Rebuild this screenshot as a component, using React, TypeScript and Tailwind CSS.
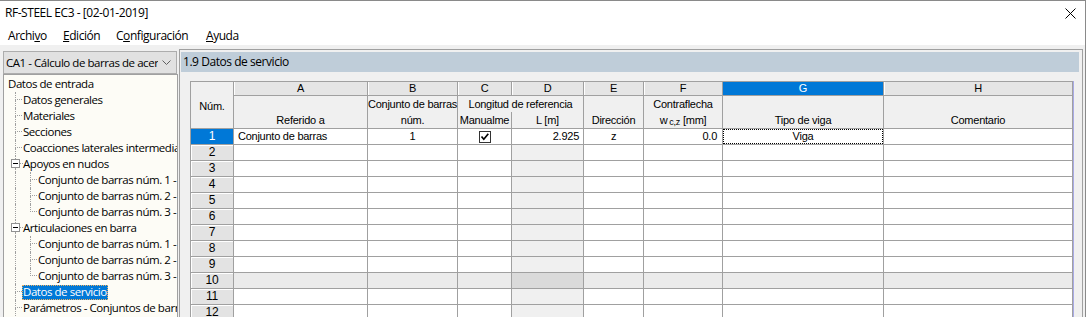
import React from "react";

interface TreeItem {
  label: string;
  level: 0 | 1 | 2;
  expand?: boolean;
  last?: boolean;
  selected?: boolean;
}

const tree: TreeItem[] = [
  { label: "Datos de entrada", level: 0 },
  { label: "Datos generales", level: 1 },
  { label: "Materiales", level: 1 },
  { label: "Secciones", level: 1 },
  { label: "Coacciones laterales intermedias", level: 1 },
  { label: "Apoyos en nudos", level: 1, expand: true },
  { label: "Conjunto de barras núm. 1 -", level: 2 },
  { label: "Conjunto de barras núm. 2 -", level: 2 },
  { label: "Conjunto de barras núm. 3 -", level: 2, last: true },
  { label: "Articulaciones en barra", level: 1, expand: true },
  { label: "Conjunto de barras núm. 1 -", level: 2 },
  { label: "Conjunto de barras núm. 2 -", level: 2 },
  { label: "Conjunto de barras núm. 3 -", level: 2, last: true },
  { label: "Datos de servicio", level: 1, selected: true },
  { label: "Parámetros - Conjuntos de barras", level: 1 },
];

// column widths incl. right border
const cols = [
  { key: "A", w: "w-[134px]" },
  { key: "B", w: "w-[90px]" },
  { key: "C", w: "w-[54px]" },
  { key: "D", w: "w-[72px]" },
  { key: "E", w: "w-[60px]" },
  { key: "F", w: "w-[79px]" },
  { key: "G", w: "w-[161px]" },
  { key: "H", w: "w-[189px]" },
];

const dot = "border-dotted border-[#a0a0a0]";

function Guide() {
  return (
    <div className="w-[15px] shrink-0 pl-[7px]">
      <div className={`h-full border-l ${dot}`} />
    </div>
  );
}

function Connector({ last }: { last?: boolean }) {
  return (
    <div className="w-[15px] shrink-0 pl-[7px] flex flex-col">
      <div className={`h-2 w-[7px] border-l border-b ${dot}`} />
      <div className={`h-2 ${last ? "" : `border-l ${dot}`}`} />
    </div>
  );
}

function ExpandBox() {
  return (
    <div className="w-[15px] shrink-0 flex">
      <div className="ml-[3px] w-[9px] flex flex-col items-center">
        <div className={`h-[3px] border-l ${dot}`} />
        <div className="w-[9px] h-[9px] border border-[#919191] bg-white flex items-center justify-center shrink-0">
          <div className="w-[5px] h-px bg-black" />
        </div>
        <div className={`flex-1 border-l ${dot}`} />
      </div>
      <div className={`w-[3px] h-[8px] border-b ${dot}`} />
    </div>
  );
}

function TreeRow({ item }: { item: TreeItem }) {
  return (
    <div className="flex h-4 whitespace-nowrap leading-4">
      {item.level === 1 && (item.expand ? <ExpandBox /> : <Connector />)}
      {item.level === 2 && (
        <>
          <Guide />
          <Connector last={item.last} />
        </>
      )}
      {item.selected ? (
        <span className="-ml-[1px] px-[1px] h-[15px] mt-[1px] leading-[14px] bg-[#0078d7] text-white outline outline-1 outline-dotted outline-[#f0b060] -outline-offset-1">
          {item.label}
        </span>
      ) : (
        <span>{item.label}</span>
      )}
    </div>
  );
}

function Checkbox() {
  return (
    <svg width="12" height="12" viewBox="0 0 12 12">
      <rect x="0.5" y="0.5" width="11" height="11" fill="#fff" stroke="#333" />
      <path d="M2.5 5.5 L4.8 8.2 L9.3 2.8" fill="none" stroke="#000" strokeWidth="1.7" />
    </svg>
  );
}

const cell = "border-r border-b border-[#a0a0a0] shrink-0 h-[16px] leading-[15px]";

function DataRow({ n }: { n: number }) {
  const first = n === 1;
  const shaded = n === 10;
  const bg = shaded ? "bg-[#ebebeb]" : "bg-white";
  return (
    <div className="flex">
      <div
        className={`w-[43px] ${cell} text-center text-[12px] ${
          first
            ? "bg-[#0078d7] text-white"
            : "bg-[#e3e3e3] text-black shadow-[inset_1px_1px_0_#fff]"
        }`}
      >
        {n}
      </div>
      {cols.map((c) => {
        let content: React.ReactNode = null;
        let align = "";
        let extra = bg;
        if (c.key === "D") extra = shaded ? "bg-[#dadada]" : first ? "bg-white" : "bg-[#f0f0f0]";
        if (first) {
          if (c.key === "A") { content = "Conjunto de barras"; align = "pl-[4px]"; }
          if (c.key === "B") { content = "1"; align = "text-center"; }
          if (c.key === "C") content = <div className="flex justify-center pt-[2px]"><Checkbox /></div>;
          if (c.key === "D") { content = "2.925"; align = "text-right pr-[4px]"; }
          if (c.key === "E") { content = "z"; align = "text-center"; }
          if (c.key === "F") { content = "0.0"; align = "text-right pr-[5px]"; }
          if (c.key === "G") content = (
            <div className="h-full border border-dotted border-black text-center leading-[13px]">Viga</div>
          );
        }
        return (
          <div key={c.key} className={`${c.w} ${cell} ${extra} ${align}`}>
            {content}
          </div>
        );
      })}
    </div>
  );
}

function HeaderCol({ w, top, bottom }: { w: string; top?: React.ReactNode; bottom?: React.ReactNode }) {
  return (
    <div className={`${w} shrink-0 border-r border-[#a0a0a0] flex flex-col text-center`}>
      <div className="h-[16px] leading-[16px] whitespace-nowrap">{top}</div>
      <div className="h-[16px] leading-[16px] whitespace-nowrap">{bottom}</div>
    </div>
  );
}

export default function App() {
  return (
    <div className="w-[1086px] h-[317px] overflow-hidden bg-[#f0f0f0] border-t border-r border-[#8a8a8a] flex flex-col text-black font-['Open_Sans','Noto_Sans',sans-serif] text-[11.5px] tracking-[-0.45px]">
      {/* Title bar */}
      <div className="h-[24px] bg-white flex items-center pl-[5px] pr-[9px] shrink-0 text-[12px]">
        <span>RF-STEEL EC3 - [02-01-2019]</span>
        <svg className="ml-auto" width="11" height="11" viewBox="0 0 11 11">
          <path d="M0.5 0.5 L10.5 10.5 M10.5 0.5 L0.5 10.5" stroke="#000" strokeWidth="1" />
        </svg>
      </div>

      {/* Menu bar */}
      <div className="h-[20px] bg-white flex items-center pl-[8px] pt-[1px] shrink-0 text-[12px]">
        <span className="w-[55px]">Archi<u>v</u>o</span>
        <span className="w-[53px]"><u>E</u>dición</span>
        <span className="w-[90px]">C<u>o</u>nfiguración</span>
        <span><u>A</u>yuda</span>
      </div>

      {/* Client area */}
      <div className="flex-1 flex min-h-0">
        {/* Left navigator */}
        <div className="w-[178px] shrink-0 pl-[3px] pt-[6px] flex flex-col">
          <div className="h-[23px] w-[174px] border border-[#adadad] bg-[#e1e1e1] flex items-center pl-[2px] shrink-0">
            <span className="w-[152px] overflow-hidden whitespace-nowrap">CA1 - Cálculo de barras de acero</span>
            <svg className="ml-auto mr-[5px]" width="9" height="5" viewBox="0 0 9 5">
              <path d="M0.5 0.5 L4.5 4.5 L8.5 0.5" fill="none" stroke="#606060" strokeWidth="1" />
            </svg>
          </div>
          <div className="flex-1 w-[175px] border-t border-l border-r border-[#a0a0a0] bg-[#fdfcf6] overflow-hidden pl-[4px] pt-[1px]">
            {tree.map((t, i) => (
              <TreeRow key={i} item={t} />
            ))}
          </div>
        </div>

        {/* Right content */}
        <div className="ml-[1px] mr-[2px] mt-[4px] flex-1 border-t border-l border-r border-[#a0a0a0] pt-[2px] pl-[1px] pr-[3px] flex flex-col min-w-0">
          <div className="h-[20px] bg-[#bfcdd9] flex items-center pl-[2px] shrink-0 text-[12px]">1.9 Datos de servicio</div>

          <div className="mt-[9px] ml-[9px] flex font-['Liberation_Sans',Arial,sans-serif] text-[11px] tracking-[-0.25px]">
            <div className="border-t border-l border-[#a0a0a0] flex flex-col">
              {/* Header block */}
              <div className="flex bg-[#f0f0f0]">
                <div className="w-[43px] h-[47px] border-r border-b border-[#a0a0a0] flex items-center justify-center pt-[2px] shrink-0">
                  Núm.
                </div>
                <div className="flex flex-col">
                  <div className="flex h-[14px] border-b border-[#a0a0a0]">
                    {cols.map((c) => (
                      <div
                        key={c.key}
                        className={`${c.w} shrink-0 border-r border-[#a0a0a0] text-center leading-[13px] ${
                          c.key === "G"
                            ? "bg-[#0078d7] text-white"
                            : "bg-[#e5e5e5] shadow-[inset_1px_0_0_#fff]"
                        }`}
                      >
                        {c.key}
                      </div>
                    ))}
                  </div>
                  <div className="flex h-[33px] border-b border-[#a0a0a0]">
                    <HeaderCol w="w-[134px]" bottom="Referido a" />
                    <HeaderCol w="w-[90px]" top="Conjunto de barras" bottom="núm." />
                    <div className="w-[126px] shrink-0 border-r border-[#a0a0a0] flex flex-col text-center">
                      <div className="h-[16px] leading-[16px] whitespace-nowrap">Longitud de referencia</div>
                      <div className="h-[16px] flex">
                        <div className="w-[54px] border-r border-[#a0a0a0] leading-[16px] overflow-hidden whitespace-nowrap">Manualme</div>
                        <div className="flex-1 leading-[16px]">L [m]</div>
                      </div>
                    </div>
                    <HeaderCol w="w-[60px]" bottom="Dirección" />
                    <HeaderCol
                      w="w-[79px]"
                      top="Contraflecha"
                      bottom={
                        <span>
                          w<sub className="text-[9px] align-baseline relative top-[1px] ml-[2px]">c,z</sub> [mm]
                        </span>
                      }
                    />
                    <HeaderCol w="w-[161px]" bottom="Tipo de viga" />
                    <HeaderCol w="w-[189px]" bottom="Comentario" />
                  </div>
                </div>
              </div>

              {Array.from({ length: 12 }, (_, i) => (
                <DataRow key={i} n={i + 1} />
              ))}
            </div>
            <div className="w-[1px] bg-[#a8aae6] shrink-0" />
          </div>
        </div>
      </div>
    </div>
  );
}
